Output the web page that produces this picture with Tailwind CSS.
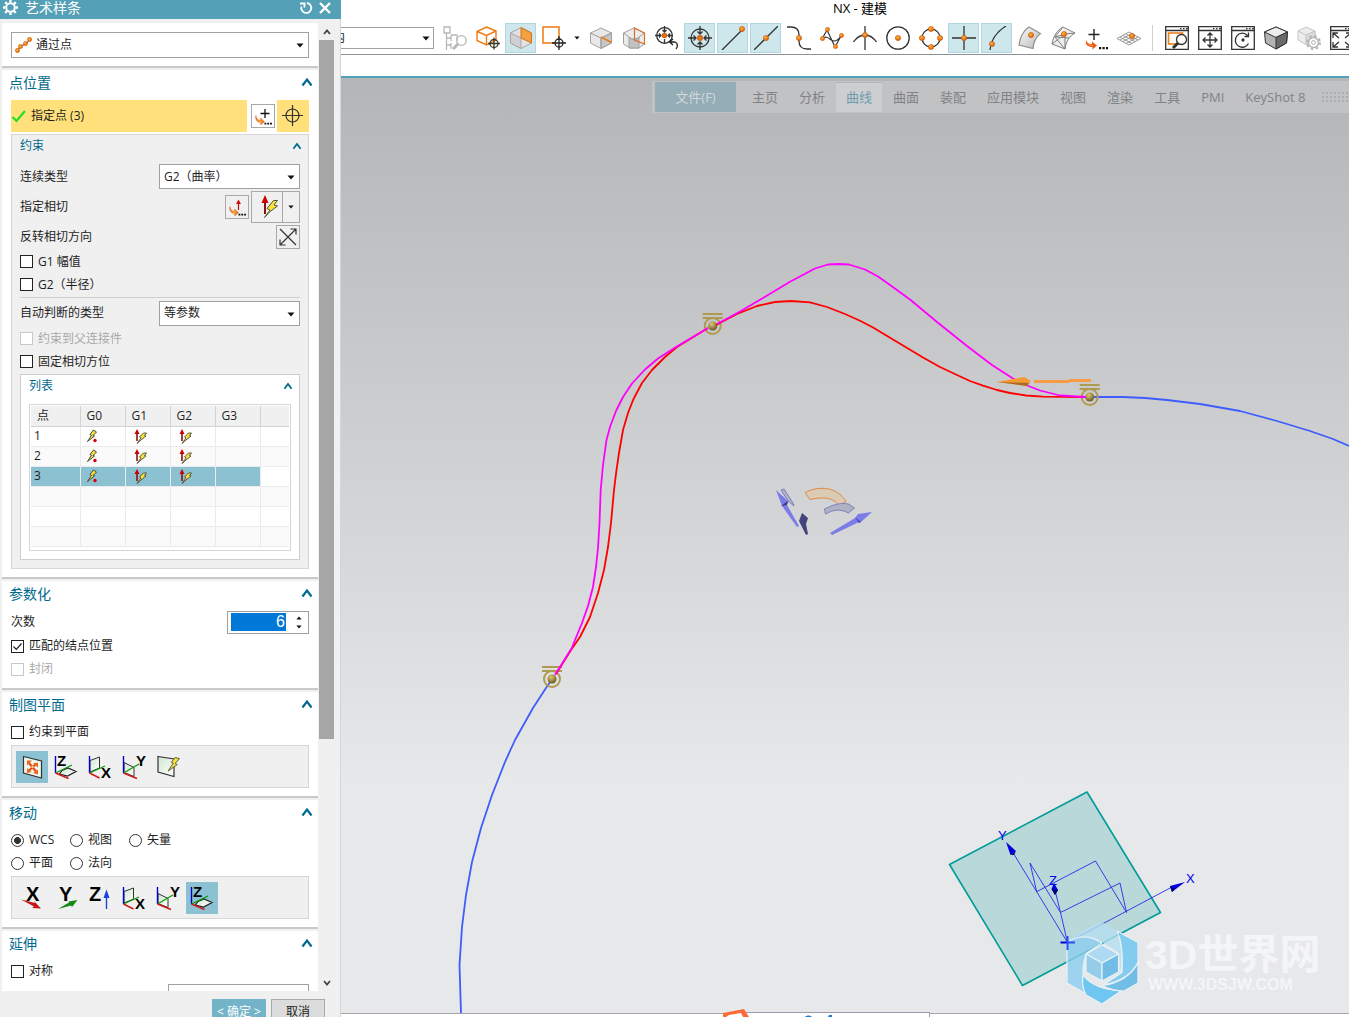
<!DOCTYPE html>
<html lang="zh-CN">
<head>
    <meta charset="UTF-8">
    <meta name="viewport" content="width=device-width, initial-scale=1.0">
    <title>NX - 建模</title>
    <script src="https://cdn.jsdelivr.net/npm/@tailwindcss/browser@4"></script>
</head>
<body class="flex h-screen overflow-hidden bg-white font-['Open_Sans','Noto_Sans_CJK_SC',sans-serif] text-xs text-[#1e1e1e]">

    <!-- shared icon parts -->
    <svg class="absolute w-0 h-0" aria-hidden="true">
        <defs>
            <radialGradient id="orange" cx=".4" cy=".35" r=".7"><stop offset="0" stop-color="#ffb03a"/><stop offset="1" stop-color="#d95f0e"/></radialGradient>
            <radialGradient id="gold" cx=".4" cy=".3" r=".8"><stop offset="0" stop-color="#e0c870"/><stop offset="1" stop-color="#5a4a1c"/></radialGradient>
            <linearGradient id="metal" x1="0" y1="0" x2="1" y2="1"><stop offset="0" stop-color="#fafafa"/><stop offset="1" stop-color="#b9b9b9"/></linearGradient>
            <linearGradient id="pale" x1="0" y1="0" x2="1" y2="1"><stop offset="0" stop-color="#cfe6d2"/><stop offset="1" stop-color="#ffffff"/></linearGradient>
            <linearGradient id="flame" x1="0" y1="0" x2="1" y2="0"><stop offset="0" stop-color="#f0601c"/><stop offset=".5" stop-color="#f8b030"/><stop offset="1" stop-color="#ec5c14"/></linearGradient>
        </defs>
        <symbol id="ball" viewBox="0 0 6 6"><circle cx="3" cy="3" r="2.6" fill="url(#orange)" stroke="#c8590c" stroke-width=".6"/></symbol>
        <symbol id="chevron" viewBox="0 0 12 10"><path d="M1.500 8.500 6 2.500 10.500 8.500" fill="none" stroke="#006a8e" stroke-width="2.200"/></symbol>
        <symbol id="caret" viewBox="0 0 8 5"><path d="M.5.5h7L4 4.500z" fill="#111"/></symbol>
        <symbol id="bolt" viewBox="0 0 12 14"><path d="M7.500 1 4 5.500l1.800.7L1 13.500 9.500 7.500 7.500 6.600 11.500 2z" fill="#f7e13c" stroke="#5a5a3a" stroke-width=".9"/></symbol>
        <symbol id="curve-arrow" viewBox="0 0 18 18"><path d="M1 8c0 3 2 5 5 5v-2.500l4 4-4 3.500v-2.500C2 15 0 12 1 8z" fill="url(#flame)" stroke="#c84a14" stroke-width=".4"/><path d="M10 15.500h2v2h-2zM13 15.500h2v2h-2zM16 15.500h2v2h-2z" fill="#111"/></symbol>
        <symbol id="g0" viewBox="0 0 12 14"><path d="M6.500 1 3 5.500l1.500.7L.5 12.500 7.500 7 6 6.500 9.500 3z" fill="#f7e13c" stroke="#4a4a3a"/><circle cx="8" cy="11.500" r="1.700" fill="#d40000"/></symbol>
        <symbol id="g1" viewBox="0 0 13 15"><path d="M3 12V4" stroke="#8b1010" stroke-width="1.600"/><path d="M.5 5 3 0l2.500 5z" fill="#c00"/><path d="M3 14.500 7 9 5.500 8l4-4h3L10.500 6.500l1.500.5-5 4z" fill="#f7e13c" stroke="#4a4a3a" stroke-width=".9"/></symbol>
        <symbol id="plane-z" viewBox="0 0 32 32">
            <path d="M12 19.500 18 17l8 3.500-8.500 4.500-8-2z" fill="url(#pale)" stroke="#222" stroke-width="1.200"/>
            <path d="M5.500 5v17" stroke="#00c" stroke-width="1.400"/><path d="M5.500 22 22 14" stroke="#0a9a0a" stroke-width="1.300"/><path d="M5.500 22 18.500 27.500" stroke="#d01818" stroke-width="1.500"/>
        </symbol>
        <symbol id="plane-x" viewBox="0 0 32 32">
            <path d="M6 9.500 15.500 6v11L6 21z" fill="url(#pale)" stroke="#333"/>
            <path d="M5.500 5v17" stroke="#00c" stroke-width="1.400"/><path d="M5.500 22 21 15" stroke="#0a9a0a" stroke-width="1.300"/><path d="M5.500 22 15.500 27" stroke="#d01818" stroke-width="1.500"/>
        </symbol>
        <symbol id="plane-y" viewBox="0 0 32 32">
            <path d="M6 11.500 16 16.500v9L6 21.500z" fill="url(#pale)" stroke="#333"/>
            <path d="M5.500 5v17" stroke="#00c" stroke-width="1.400"/><path d="M5.500 22 21 13" stroke="#0a9a0a" stroke-width="1.300"/><path d="M5.500 22 19 27.500" stroke="#d01818" stroke-width="1.500"/>
        </symbol>
        <symbol id="marker" viewBox="0 0 24 24"><path d="M2 1.500h20M2 5.500h20" stroke="#b09a50" stroke-width="2"/><circle cx="12" cy="13.500" r="8" fill="none" stroke="#b09a50" stroke-width="2"/><circle cx="12" cy="13.500" r="4.500" fill="url(#gold)"/></symbol>
    </svg>

    <!-- dialog -->
    <aside class="w-[341px] shrink-0 flex flex-col bg-[#f0f0f0] border-r border-[#d5d5d8]">
        <header class="h-[19px] shrink-0 -mr-px flex items-center bg-[#54a0b7] text-white text-sm pl-[3px] pr-[10px]">
            <svg class="w-[15px] h-[15px] -mt-1" viewBox="0 0 15 15" fill="none" stroke="#fff"><circle cx="7.500" cy="7.500" r="4.300" stroke-width="2"/><path d="M7.500 0v2.500M7.500 12.500V15M0 7.500h2.500M12.500 7.500H15M2.200 2.200l1.800 1.800M11 11l1.800 1.800M2.200 12.800 4 11M11 4l1.800-1.800" stroke-width="2.400"/></svg>
            <h1 class="ml-[7px] -mt-1 leading-5">艺术样条</h1>
            <button class="ml-auto -mt-1" aria-label="重置"><svg class="w-[14px] h-[14px]" viewBox="0 0 14 14" fill="none" stroke="#fff" stroke-width="1.800"><path d="M8 2a5 5 0 1 1-5.500 3.500"/><path d="M1 2.500h4.500v4"/></svg></button>
            <button class="ml-[6px] -mt-1" aria-label="关闭"><svg class="w-3 h-3" viewBox="0 0 12 12" stroke="#fff" stroke-width="2.400"><path d="M1 1l10 10M11 1 1 11"/></svg></button>
        </header>

        <div class="flex-1 min-h-0 flex pt-1 pl-[2px] pr-[6px]">
            <div class="flex-1 overflow-hidden">

                <section class="bg-white border-b-2 border-[#c9c9cb] mb-[2px] px-[9px] pt-[9px] pb-2">
                    <div class="relative">
                        <svg class="absolute left-1 top-[5px] w-[17px] h-4" viewBox="0 0 17 16"><path d="M2.500 13 6 9l5-2 4-4.500" fill="none" stroke="#444"/><use href="#ball" x="0" y="11" width="5" height="5"/><use href="#ball" x="3" y="7" width="5" height="5"/><use href="#ball" x="8" y="4" width="5" height="5"/><use href="#ball" x="12" y="0" width="5" height="5"/></svg>
                        <select aria-label="类型" class="appearance-none w-full h-[26px] bg-white border border-[#a0a0a0] pl-6"><option>通过点</option></select>
                        <svg class="absolute right-[5px] top-[11px] w-2 h-[5px]"><use href="#caret"/></svg>
                    </div>
                </section>

                <section class="bg-white border-b-2 border-[#c9c9cb] mb-[2px] px-[9px] pb-2">
                    <h2 class="h-[26px] -ml-[2px] -mr-[4px] flex items-center justify-between text-sm text-[#006a8e]">点位置<button aria-label="折叠"><svg class="w-3 h-[10px] -mt-[2px]"><use href="#chevron"/></svg></button></h2>
                    <div class="mt-1 h-8 flex items-center">
                        <div class="flex-1 h-full flex items-center bg-[#ffe07a]">
                            <svg class="w-4 h-4 mr-1" viewBox="0 0 16 16"><path d="M1.500 9 5.500 13 14 3" fill="none" stroke="#22e022" stroke-width="2.200"/></svg>指定点 (3)
                        </div>
                        <button class="w-6 h-6 mx-1 bg-white border border-[#a8a8a8]" aria-label="点对话框"><svg class="w-[22px] h-[22px]" viewBox="0 0 22 22"><path d="M13 4v9M8.500 8.500h9" stroke="#111" stroke-width="1.300"/><use href="#curve-arrow" x="3" y="3" width="17" height="17"/></svg></button>
                        <button class="w-8 h-8 -ml-[2px] flex items-center justify-center bg-[#ffe07a]" aria-label="指定点"><svg class="w-[22px] h-[22px]" viewBox="0 0 22 22" fill="none" stroke="#333" stroke-width="1.200"><circle cx="10.500" cy="10.500" r="6.500"/><path d="M10.500 0v21M0 10.500h21"/></svg></button>
                    </div>

                    <div class="mt-[2px] border border-[#d6d6d8] bg-[#f0f0f0] px-2 pb-2">
                        <h3 class="h-[22px] -mr-[2px] flex items-center justify-between text-[#006a8e]">约束<button aria-label="折叠"><svg class="w-[10px] h-2"><use href="#chevron"/></svg></button></h3>
                        <div class="mt-[5px] h-[29px] flex items-center justify-between">
                            <label for="continuity">连续类型</label>
                            <div class="relative">
                                <select id="continuity" class="appearance-none w-[141px] h-[25px] bg-white border border-[#a0a0a0] pl-1"><option>G2（曲率）</option></select>
                                <svg class="absolute right-[5px] top-[11px] w-2 h-[5px]"><use href="#caret"/></svg>
                            </div>
                        </div>
                        <div class="h-8 flex items-center">
                            <span class="mr-auto">指定相切</span>
                            <button class="w-6 h-6 mr-[2px] border border-[#a8a8a8]" aria-label="矢量对话框"><svg class="w-[22px] h-[22px]" viewBox="0 0 22 22"><path d="M12.500 5v9" stroke="#b01010" stroke-width="1.200"/><path d="M10 8 12.500 3.500 15 8z" fill="#d01010"/><use href="#curve-arrow" x="3" y="3" width="17" height="17"/></svg></button>
                            <button class="w-8 h-8 flex items-center justify-center border border-[#a8a8a8]" aria-label="自动判断的矢量"><svg class="w-6 h-6" viewBox="0 0 24 24"><path d="M10 19V6" stroke="#8b1010" stroke-width="2"/><path d="M6.500 8 10 0l3.500 8z" fill="#c00"/><path d="M9.500 22.500 15 15l-3-1.500 6.500-8h4L19 10l3.500 1-8 6z" fill="#f7e13c" stroke="#55553a"/></svg></button>
                            <button class="w-[18px] h-8 -ml-px flex items-center justify-center border border-[#a8a8a8]" aria-label="更多矢量"><svg class="w-[6px] h-1"><use href="#caret"/></svg></button>
                        </div>
                        <div class="h-[27px] flex items-center justify-between">
                            <span>反转相切方向</span>
                            <button class="w-6 h-6 border border-[#a8a8a8]" aria-label="反转相切方向"><svg class="w-[22px] h-[22px]" viewBox="0 0 22 22" fill="none" stroke="#333" stroke-width="1.200"><path d="M3 3l16 16M3.500 18.500 18.500 3.500M13.500 3H19v5.500M3 13.500V19h5.500"/></svg></button>
                        </div>
                        <label class="h-[23px] flex items-center gap-[5px]"><input type="checkbox" class="appearance-none w-[13px] h-[13px] bg-white border border-[#222]">G1 幅值</label>
                        <label class="h-[23px] flex items-center gap-[5px]"><input type="checkbox" class="appearance-none w-[13px] h-[13px] bg-white border border-[#222]">G2（半径）</label>
                        <hr class="my-px border-[#cfcfd2]">
                        <div class="h-7 flex items-center justify-between">
                            <label for="inferred">自动判断的类型</label>
                            <div class="relative">
                                <select id="inferred" class="appearance-none w-[141px] h-[25px] bg-white border border-[#a0a0a0] pl-1"><option>等参数</option></select>
                                <svg class="absolute right-[5px] top-[11px] w-2 h-[5px]"><use href="#caret"/></svg>
                            </div>
                        </div>
                        <label class="h-[23px] flex items-center gap-[5px] text-[#a9a9a9]"><input type="checkbox" disabled class="appearance-none w-[13px] h-[13px] bg-white border border-[#c8c8c8]">约束到父连接件</label>
                        <label class="h-[23px] flex items-center gap-[5px]"><input type="checkbox" class="appearance-none w-[13px] h-[13px] bg-white border border-[#222]">固定相切方位</label>

                        <div class="mt-px border border-[#cdcdd2] bg-white px-2 pb-2">
                            <h3 class="h-[22px] -mr-[2px] flex items-center justify-between text-[#006a8e]">列表<button aria-label="折叠"><svg class="w-[10px] h-2"><use href="#chevron"/></svg></button></h3>
                            <div class="mt-[7px] border border-[#d6d6d8] p-px pb-[3px]">
                                <table class="w-full table-fixed border-collapse text-left leading-4">
                                    <colgroup><col class="w-[49px]"><col class="w-[45px]"><col class="w-[45px]"><col class="w-[45px]"><col class="w-[45px]"><col></colgroup>
                                    <thead class="bg-[#f0f0f0]">
                                        <tr class="h-5 border-b border-[#d2d2d4]">
                                            <th class="font-normal p-0 pl-[6px] border-r border-[#d2d2d4]">点</th>
                                            <th class="font-normal p-0 pl-[6px] border-r border-[#d2d2d4]">G0</th>
                                            <th class="font-normal p-0 pl-[6px] border-r border-[#d2d2d4]">G1</th>
                                            <th class="font-normal p-0 pl-[6px] border-r border-[#d2d2d4]">G2</th>
                                            <th class="font-normal p-0 pl-[6px] border-r border-[#d2d2d4]">G3</th>
                                            <th class="p-0"></th>
                                        </tr>
                                    </thead>
                                    <tbody>
                                        <tr class="h-5 border-b border-[#ebebeb]">
                                            <td class="p-0 pl-[3px] border-r border-[#ebebeb]">1</td>
                                            <td class="p-0 pl-[6px] border-r border-[#ebebeb]"><svg class="w-3 h-[14px]"><use href="#g0"/></svg></td>
                                            <td class="p-0 pl-2 border-r border-[#ebebeb]"><svg class="w-[13px] h-[15px]"><use href="#g1"/></svg></td>
                                            <td class="p-0 pl-2 border-r border-[#ebebeb]"><svg class="w-[13px] h-[15px]"><use href="#g1"/></svg></td>
                                            <td class="p-0 border-r border-[#ebebeb]"></td><td class="p-0"></td>
                                        </tr>
                                        <tr class="h-5 border-b border-[#ebebeb] bg-[#fafafa]">
                                            <td class="p-0 pl-[3px] border-r border-[#ebebeb]">2</td>
                                            <td class="p-0 pl-[6px] border-r border-[#ebebeb]"><svg class="w-3 h-[14px]"><use href="#g0"/></svg></td>
                                            <td class="p-0 pl-2 border-r border-[#ebebeb]"><svg class="w-[13px] h-[15px]"><use href="#g1"/></svg></td>
                                            <td class="p-0 pl-2 border-r border-[#ebebeb]"><svg class="w-[13px] h-[15px]"><use href="#g1"/></svg></td>
                                            <td class="p-0 border-r border-[#ebebeb]"></td><td class="p-0"></td>
                                        </tr>
                                        <tr class="h-5 border-b border-[#ebebeb]">
                                            <td class="p-0 pl-[3px] border-r border-[#ebebeb] bg-[#8cc1d1]">3</td>
                                            <td class="p-0 pl-[6px] border-r border-[#ebebeb] bg-[#8cc1d1]"><svg class="w-3 h-[14px]"><use href="#g0"/></svg></td>
                                            <td class="p-0 pl-2 border-r border-[#ebebeb] bg-[#8cc1d1]"><svg class="w-[13px] h-[15px]"><use href="#g1"/></svg></td>
                                            <td class="p-0 pl-2 border-r border-[#ebebeb] bg-[#8cc1d1]"><svg class="w-[13px] h-[15px]"><use href="#g1"/></svg></td>
                                            <td class="p-0 border-r border-[#ebebeb] bg-[#8cc1d1]"></td><td class="p-0"></td>
                                        </tr>
                                        <tr class="h-5 border-b border-[#ebebeb] bg-[#fafafa]"><td class="border-r border-[#ebebeb]"></td><td class="border-r border-[#ebebeb]"></td><td class="border-r border-[#ebebeb]"></td><td class="border-r border-[#ebebeb]"></td><td class="border-r border-[#ebebeb]"></td><td></td></tr>
                                        <tr class="h-5 border-b border-[#ebebeb]"><td class="border-r border-[#ebebeb]"></td><td class="border-r border-[#ebebeb]"></td><td class="border-r border-[#ebebeb]"></td><td class="border-r border-[#ebebeb]"></td><td class="border-r border-[#ebebeb]"></td><td></td></tr>
                                        <tr class="h-5 border-b border-[#ebebeb] bg-[#fafafa]"><td class="border-r border-[#ebebeb]"></td><td class="border-r border-[#ebebeb]"></td><td class="border-r border-[#ebebeb]"></td><td class="border-r border-[#ebebeb]"></td><td class="border-r border-[#ebebeb]"></td><td></td></tr>
                                    </tbody>
                                </table>
                            </div>
                        </div>
                    </div>
                </section>

                <section class="bg-white border-b-2 border-[#c9c9cb] mb-[2px] px-[9px] pb-[7px]">
                    <h2 class="h-[26px] -ml-[2px] -mr-[4px] flex items-center justify-between text-sm text-[#006a8e]">参数化<button aria-label="折叠"><svg class="w-3 h-[10px] -mt-[2px]"><use href="#chevron"/></svg></button></h2>
                    <div class="mt-[3px] h-[25px] flex items-center justify-between">
                        <label for="degree">次数</label>
                        <div class="w-[82px] h-[23px] flex items-center border border-[#a0a0a0] bg-white pl-[3px]">
                            <input id="degree" type="text" value="6" class="w-[55px] h-[18px] bg-[#0078d7] text-white text-base text-right pr-px font-['Liberation_Sans',sans-serif]">
                            <div class="flex-1 flex flex-col items-center gap-[5px] pl-1">
                                <button aria-label="增加"><svg class="w-[6px] h-1 rotate-180"><use href="#caret"/></svg></button>
                                <button aria-label="减少"><svg class="w-[6px] h-1"><use href="#caret"/></svg></button>
                            </div>
                        </div>
                    </div>
                    <label class="relative h-[23px] flex items-center gap-[5px]"><input type="checkbox" checked class="peer appearance-none w-[13px] h-[13px] bg-white border border-[#222]"><svg class="absolute left-[2px] top-[7px] w-[9px] h-[9px] hidden peer-checked:block" viewBox="0 0 9 9"><path d="M.5 4.500 3.300 7.300 8.500 1.500" fill="none" stroke="#222" stroke-width="1.200"/></svg>匹配的结点位置</label>
                    <label class="h-[23px] flex items-center gap-[5px] text-[#a9a9a9]"><input type="checkbox" disabled class="appearance-none w-[13px] h-[13px] bg-white border border-[#c8c8c8]">封闭</label>
                </section>

                <section class="bg-white border-b-2 border-[#c9c9cb] mb-[2px] px-[9px] pb-2">
                    <h2 class="h-[26px] -ml-[2px] -mr-[4px] flex items-center justify-between text-sm text-[#006a8e]">制图平面<button aria-label="折叠"><svg class="w-3 h-[10px] -mt-[2px]"><use href="#chevron"/></svg></button></h2>
                    <label class="mt-[3px] h-[23px] flex items-center gap-[5px]"><input type="checkbox" class="appearance-none w-[13px] h-[13px] bg-white border border-[#222]">约束到平面</label>
                    <div class="mt-px h-[43px] flex items-end gap-[2px] pl-1 pb-1 border border-[#d6d6d8] bg-[#f0f0f0]">
                        <button class="w-8 h-8 bg-[#8cc1d1]" aria-label="视图平面"><svg class="w-8 h-8" viewBox="0 0 32 32"><path d="M7.500 5.500 25.500 10v17L7.500 22z" fill="#eef8ee" stroke="#333" stroke-width="1.200"/><path d="M12.500 11.500 20.500 21M20.500 12.500 12.500 20" stroke="#e84a10" stroke-width="2.200"/><path d="M11 9.500h5l-5 5zM22 11.500v5l-5-4zM11 17v5l4.500-1zM22 23.500v-5l-5 3.500z" fill="#f0641c"/><circle cx="16.500" cy="16" r="1.200" fill="#ffd0a0"/></svg></button>
                        <button class="w-8 h-8" aria-label="XC-YC 平面"><svg class="w-8 h-8" viewBox="0 0 32 32"><use href="#plane-z"/><text x="7" y="15" font-family="Liberation Sans" font-weight="700" font-size="15">Z</text></svg></button>
                        <button class="w-8 h-8" aria-label="YC-ZC 平面"><svg class="w-8 h-8" viewBox="0 0 32 32"><use href="#plane-x"/><text x="17" y="27" font-family="Liberation Sans" font-weight="700" font-size="15">X</text></svg></button>
                        <button class="w-8 h-8" aria-label="XC-ZC 平面"><svg class="w-8 h-8" viewBox="0 0 32 32"><use href="#plane-y"/><text x="18" y="15" font-family="Liberation Sans" font-weight="700" font-size="15">Y</text></svg></button>
                        <button class="w-8 h-8" aria-label="自动判断的平面"><svg class="w-8 h-8" viewBox="0 0 32 32"><path d="M6 5.500 22 8v17.500L6 21z" fill="url(#pale)" stroke="#333" stroke-width="1.200"/><use href="#bolt" x="15" y="4" width="13" height="18"/></svg></button>
                    </div>
                </section>

                <section class="bg-white border-b-2 border-[#c9c9cb] mb-[2px] px-[9px] pb-2">
                    <h2 class="h-[26px] -ml-[2px] -mr-[4px] flex items-center justify-between text-sm text-[#006a8e]">移动<button aria-label="折叠"><svg class="w-3 h-[10px] -mt-[2px]"><use href="#chevron"/></svg></button></h2>
                    <div class="mt-[3px] grid grid-cols-[59px_59px_59px] auto-rows-[23px] items-center">
                        <label class="flex items-center gap-[5px]"><input type="radio" name="move" checked class="appearance-none w-[13px] h-[13px] rounded-full bg-white border border-[#333] checked:bg-[radial-gradient(circle,#333_40%,white_48%)]">WCS</label>
                        <label class="flex items-center gap-[5px]"><input type="radio" name="move" class="appearance-none w-[13px] h-[13px] rounded-full bg-white border border-[#333] checked:bg-[radial-gradient(circle,#333_40%,white_48%)]">视图</label>
                        <label class="flex items-center gap-[5px]"><input type="radio" name="move" class="appearance-none w-[13px] h-[13px] rounded-full bg-white border border-[#333] checked:bg-[radial-gradient(circle,#333_40%,white_48%)]">矢量</label>
                        <label class="flex items-center gap-[5px]"><input type="radio" name="move" class="appearance-none w-[13px] h-[13px] rounded-full bg-white border border-[#333] checked:bg-[radial-gradient(circle,#333_40%,white_48%)]">平面</label>
                        <label class="flex items-center gap-[5px]"><input type="radio" name="move" class="appearance-none w-[13px] h-[13px] rounded-full bg-white border border-[#333] checked:bg-[radial-gradient(circle,#333_40%,white_48%)]">法向</label>
                    </div>
                    <div class="mt-px h-[43px] flex items-end gap-[2px] pl-1 pb-1 border border-[#d6d6d8] bg-[#f0f0f0]">
                        <button class="w-8 h-8" aria-label="沿 X"><svg class="w-8 h-8" viewBox="0 0 32 32"><text x="10" y="19" font-family="Liberation Sans" font-weight="700" font-size="20">X</text><path d="M5 17.500 19 21l-1-2 7 7.500-9-.5 2-1.500z" fill="#c81414"/></svg></button>
                        <button class="w-8 h-8" aria-label="沿 Y"><svg class="w-8 h-8" viewBox="0 0 32 32"><text x="9" y="19" font-family="Liberation Sans" font-weight="700" font-size="20">Y</text><path d="M8 27 19 20.500 18.500 19.500 27.500 18 22 25l-1-1.500z" fill="#138a13"/></svg></button>
                        <button class="w-8 h-8" aria-label="沿 Z"><svg class="w-8 h-8" viewBox="0 0 32 32"><text x="5" y="19" font-family="Liberation Sans" font-weight="700" font-size="20">Z</text><path d="M21.800 27V16H19.500L22.500 7.500l3 8.500h-2.300V27z" fill="#1446d8"/></svg></button>
                        <button class="w-8 h-8" aria-label="YC-ZC"><svg class="w-8 h-8" viewBox="0 0 32 32"><use href="#plane-x"/><text x="17" y="27" font-family="Liberation Sans" font-weight="700" font-size="15">X</text></svg></button>
                        <button class="w-8 h-8" aria-label="XC-ZC"><svg class="w-8 h-8" viewBox="0 0 32 32"><use href="#plane-y"/><text x="18" y="15" font-family="Liberation Sans" font-weight="700" font-size="15">Y</text></svg></button>
                        <button class="w-8 h-8 bg-[#8cc1d1]" aria-label="XC-YC"><svg class="w-8 h-8" viewBox="0 0 32 32"><use href="#plane-z"/><text x="7" y="15" font-family="Liberation Sans" font-weight="700" font-size="15">Z</text></svg></button>
                    </div>
                </section>

                <section class="bg-white px-[9px] pb-2">
                    <h2 class="h-[26px] -ml-[2px] -mr-[4px] flex items-center justify-between text-sm text-[#006a8e]">延伸<button aria-label="折叠"><svg class="w-3 h-[10px] -mt-[2px]"><use href="#chevron"/></svg></button></h2>
                    <label class="mt-[3px] h-[23px] flex items-center gap-[5px]"><input type="checkbox" class="appearance-none w-[13px] h-[13px] bg-white border border-[#222]">对称</label>
                    <input type="text" aria-label="起点" class="block mt-px ml-auto w-[141px] h-[25px] border border-[#a0a0a0]">
                </section>
            </div>

            <!-- scrollbar -->
            <div class="ml-px w-[15px] flex flex-col items-center bg-[#f0f0f0]">
                <svg class="w-2 h-[17px] shrink-0" viewBox="0 0 8 17"><path d="M1 11 4 7.500 7 11" fill="none" stroke="#444" stroke-width="1.800"/></svg>
                <div class="w-full basis-[699px] bg-[#a6a6a6]"></div>
                <svg class="w-2 h-[17px] shrink-0 mt-auto" viewBox="0 0 8 17"><path d="M1 7 4 10.500 7 7" fill="none" stroke="#444" stroke-width="1.800"/></svg>
            </div>
        </div>

        <footer class="h-[26px] shrink-0 flex justify-end gap-[5px] pt-2 pr-[15px] overflow-hidden">
            <button class="w-[54px] h-[26px] shrink-0 bg-[#74b4c8] text-white">&lt; 确定 &gt;</button>
            <button class="w-[54px] h-[26px] shrink-0 bg-[#dcdcdc] border border-[#a8a8a8]">取消</button>
        </footer>
    </aside>

    <!-- main window -->
    <main class="flex-1 min-w-0 flex flex-col">
        <div class="h-[22px] shrink-0 text-center text-[13px] leading-4 pl-[30px] text-black">NX - 建模</div>

        <div class="h-[33px] shrink-0 flex items-center gap-[2px] border-b border-[#8a9298] overflow-hidden">
            <div class="relative w-[93px] mr-[3px] shrink-0 overflow-hidden">
                <select aria-label="选择范围" class="appearance-none block -ml-[86px] w-[179px] h-[22px] bg-white border border-[#a0a0a0] pl-[5px]"><option>仅在工作部件内</option></select>
                <svg class="absolute right-1 top-[9px] w-2 h-[5px]"><use href="#caret"/></svg>
            </div>
            <button class="w-[31px] h-[30px] shrink-0 flex items-center justify-center" aria-label="选择过滤器"><svg class="w-6 h-6" viewBox="0 0 24 24" fill="none" stroke="#b8b8b8" stroke-width="1.300"><path d="M1 1h6v6H1zM3.500 7v17M3.500 12H8M3.500 19H8M8 9h6v6M8 15V9M8 17v6"/><circle cx="18.500" cy="14.500" r="4.800"/><path d="M15 18l-5 5" stroke-width="3"/></svg></button>
            <button class="w-[31px] h-[30px] shrink-0 flex items-center justify-center" aria-label="组件"><svg class="w-6 h-6" viewBox="0 0 24 24" fill="none" stroke="#ee7a10" stroke-width="1.400"><path d="M10.500 1 20 5v9l-9.500 5L1 14.500V5.500zM1 5.500l9.500 4L20 5M10.500 9.500V19"/><g stroke="#3a3a2a" stroke-width="1.300"><circle cx="18" cy="17.500" r="4"/><path d="M18 11.500v12M12 17.500h12"/></g></svg></button>
            <button class="w-[31px] h-[30px] shrink-0 flex items-center justify-center border border-[#b0d6df] bg-[#cde7ec]" aria-label="面"><svg class="w-6 h-6" viewBox="0 0 24 24" stroke="#a8a8a8"><path d="M12 1.500 22.500 7v10L12 22.500 1.500 17V7z" fill="#e2e2e2"/><path d="M12 12v10.500L1.500 17V7z" fill="#d0d0d0"/><path d="M12 1.500 22.500 7v10L12 12z" fill="#f2a040" stroke="#d8701c"/></svg></button>
            <button class="w-[31px] h-[30px] shrink-0 flex items-center justify-center" aria-label="框选"><svg class="w-6 h-6" viewBox="0 0 24 24" fill="none"><path d="M1 1h16v16H1z" stroke="#ee7a10" stroke-width="1.500"/><circle cx="17" cy="17" r="4" fill="#fff" stroke="#222" stroke-width="1.300"/><path d="M17 10v14M10 17h14" stroke="#222" stroke-width="1.300"/></svg></button>
            <button class="w-3 shrink-0 flex justify-center" aria-label="更多"><svg class="w-[6px] h-1"><use href="#caret"/></svg></button>
            <button class="w-[31px] h-[30px] shrink-0 flex items-center justify-center" aria-label="边"><svg class="w-6 h-6" viewBox="0 0 24 24" stroke="#a0a0a0"><path d="M12 2 22.500 7v10L12 22.500 1.500 17V7z" fill="#e8e8e8"/><path d="M12 12 22.500 7v10L12 22.500z" fill="#c6c6c6"/><path d="M1.500 7 12 12 22.500 7M12 12v10.500" fill="none"/><path d="M12 11l10.500 5.500" stroke="#ee7a10" stroke-width="1.500"/></svg></button>
            <button class="w-[31px] h-[30px] shrink-0 flex items-center justify-center" aria-label="实体边"><svg class="w-6 h-6" viewBox="0 0 24 24" stroke="#a0a0a0"><path d="M12 2 22.500 7v11L17 22H8L1.500 18V7z" fill="#ececec"/><path d="M7 11c3 3 7 3 10 0v11H7z" fill="#c2c2c2"/><path d="M1.500 7 7 11M7 11c3 3 7 3 10 0l5.500-4" fill="none"/><path d="M12.500 2v12L22.500 18V7z" fill="none" stroke="#d8702c" stroke-width="1.200"/></svg></button>
            <button class="w-[31px] h-[30px] shrink-0 flex items-center justify-center" aria-label="重置捕捉"><svg class="w-6 h-6" viewBox="0 0 24 24" fill="none" stroke="#333" stroke-width="1.300"><circle cx="9.500" cy="9.500" r="7.800"/><path d="M9.500 0v6M9.500 13v5M0 9.500h6M13 9.500h5M7.500 4l2 2 2-2M4 7.500l2 2-2 2M15 7.500l-2 2 2 2"/><circle cx="9.500" cy="9.500" r="2" fill="#ee7a10" stroke="#d2600c"/><path d="M15 16h5c3 1 3 5 1 7M18 13l-3.500 3L18 19" stroke="#222"/></svg></button>
            <button class="w-[31px] h-[30px] shrink-0 flex items-center justify-center border border-[#b0d6df] bg-[#cde7ec]" aria-label="启用捕捉点"><svg class="w-6 h-6" viewBox="0 0 24 24" fill="none" stroke="#333" stroke-width="1.300"><circle cx="12" cy="12" r="9"/><path d="M12 0v8M12 16v8M0 12h8M16 12h8M9.500 5.500 12 8l2.500-2.500M9.500 18.500 12 16l2.500 2.500M5.500 9.500 8 12l-2.500 2.500M18.500 9.500 16 12l2.500 2.500"/><circle cx="12" cy="12" r="2.300" fill="#ee7a10" stroke="#d2600c"/></svg></button>
            <button class="w-[31px] h-[30px] shrink-0 flex items-center justify-center border border-[#b0d6df] bg-[#cde7ec]" aria-label="端点"><svg class="w-6 h-6" viewBox="0 0 24 24"><path d="M1 24 22 3" stroke="#333" stroke-width="1.300"/><use href="#ball" x="18" y="0" width="6" height="6"/></svg></button>
            <button class="w-[31px] h-[30px] shrink-0 flex items-center justify-center border border-[#b0d6df] bg-[#cde7ec]" aria-label="中点"><svg class="w-6 h-6" viewBox="0 0 24 24"><path d="M0 24 24 0" stroke="#333" stroke-width="1.300"/><use href="#ball" x="9" y="9" width="6" height="6"/></svg></button>
            <button class="w-[31px] h-[30px] shrink-0 flex items-center justify-center" aria-label="控制点"><svg class="w-6 h-6" viewBox="0 0 24 24"><path d="M0 1h4c5 0 8 3 8 8v6c0 5 3 8 8 8h5" fill="none" stroke="#333" stroke-width="1.300"/><use href="#ball" x="9" y="9" width="6" height="6"/></svg></button>
            <button class="w-[31px] h-[30px] shrink-0 flex items-center justify-center" aria-label="极点"><svg class="w-6 h-6" viewBox="0 0 24 24"><path d="M2 13 7 4l8 17 6-11M2 13c6-5 8 2 12 2 3 0 5-2 7-5" fill="none" stroke="#333" stroke-width="1.200"/><use href="#ball" x="0" y="10" width="5" height="5"/><use href="#ball" x="5" y="1" width="5" height="5"/><use href="#ball" x="13" y="18" width="5" height="5"/><use href="#ball" x="19" y="7" width="5" height="5"/></svg></button>
            <button class="w-[31px] h-[30px] shrink-0 flex items-center justify-center" aria-label="交点"><svg class="w-6 h-6" viewBox="0 0 24 24"><path d="M12 0v24M.5 16C4 11 8 9 12 9s8 2 11.500 7" fill="none" stroke="#333" stroke-width="1.300"/><use href="#ball" x="9" y="6" width="6" height="6"/></svg></button>
            <button class="w-[31px] h-[30px] shrink-0 flex items-center justify-center" aria-label="圆心"><svg class="w-6 h-6" viewBox="0 0 24 24"><circle cx="12" cy="12" r="11.200" fill="none" stroke="#333" stroke-width="1.300"/><use href="#ball" x="9" y="9" width="6" height="6"/></svg></button>
            <button class="w-[31px] h-[30px] shrink-0 flex items-center justify-center" aria-label="象限点"><svg class="w-6 h-6" viewBox="0 0 24 24"><circle cx="12" cy="12" r="9" fill="none" stroke="#333" stroke-width="1.300"/><use href="#ball" x="9" y="0" width="6" height="6"/><use href="#ball" x="9" y="18" width="6" height="6"/><use href="#ball" x="0" y="9" width="6" height="6"/><use href="#ball" x="18" y="9" width="6" height="6"/></svg></button>
            <button class="w-[31px] h-[30px] shrink-0 flex items-center justify-center border border-[#b0d6df] bg-[#cde7ec]" aria-label="现有点"><svg class="w-6 h-6" viewBox="0 0 24 24"><path d="M12 0v24M0 12h24" stroke="#333" stroke-width="1.300"/><use href="#ball" x="9" y="9" width="6" height="6"/></svg></button>
            <button class="w-[31px] h-[30px] shrink-0 flex items-center justify-center border border-[#b0d6df] bg-[#cde7ec]" aria-label="曲线上的点"><svg class="w-6 h-6" viewBox="0 0 24 24"><path d="M21 0C13 5 6 13 5 24" fill="none" stroke="#333" stroke-width="1.300"/><use href="#ball" x="4" y="15" width="6" height="6"/></svg></button>
            <button class="w-[31px] h-[30px] shrink-0 flex items-center justify-center" aria-label="面上的点"><svg class="w-6 h-6" viewBox="0 0 24 24"><path d="M11 1 22.500 7.500C18 11 15.500 16 15 22.500L1 19C2 12 5 5 11 1z" fill="url(#metal)" stroke="#909090" stroke-width="1.200"/><use href="#ball" x="10" y="6" width="6" height="6"/></svg></button>
            <button class="w-[31px] h-[30px] shrink-0 flex items-center justify-center" aria-label="小平面顶点"><svg class="w-6 h-6" viewBox="0 0 24 24"><path d="M12 1 24 7c-5 3-9 8-10 16L1 18C2 11 6 4 12 1zM12 1 4 11l10 12M4 11l10-3 10-1M1 18 14 8l0 15M4 11 18 12" fill="#e4e4e4" fill-opacity=".7" stroke="#808080"/><use href="#ball" x="10" y="5" width="6" height="6"/></svg></button>
            <button class="w-[31px] h-[30px] shrink-0 flex items-center justify-center" aria-label="点构造器"><svg class="w-6 h-6" viewBox="0 0 24 24"><path d="M10 3v11M4.500 8.500h11" stroke="#222" stroke-width="1.400"/><path d="M2 14c1 3 3 4 6 4v-2.500l5 4-4.500 4V21C4 21 1 19 2 14z" fill="#ee5a20"/><path d="M3 16c2 3 4 3.500 6 3.500" fill="none" stroke="#f8b030"/><path d="M15 21h2.200v2.200H15zM18.500 21h2.200v2.200h-2.200zM22 21h2v2.200h-2z" fill="#111"/></svg></button>
            <button class="w-[31px] h-[30px] shrink-0 flex items-center justify-center" aria-label="有界栅格上的点"><svg class="w-6 h-6" viewBox="0 0 24 24"><path d="M0 12.500 12 6l12 6.500L12 19zM3 11l12 6.500M6 9.500l12 6M9 8l12 6M3 14 15 7.500M6 15.500 18 9M9 17.500 21 11" fill="none" stroke="#999"/><use href="#ball" x="12" y="7" width="6" height="6"/></svg></button>
            <div class="w-[13px] h-[26px] shrink-0 flex justify-center"><div class="w-px h-full bg-[#d0d0d0]"></div></div>
            <button class="w-[31px] h-[30px] shrink-0 flex items-center justify-center" aria-label="缩放"><svg class="w-6 h-6" viewBox="0 0 24 24" fill="none" stroke="#333" stroke-width="1.300"><path d="M.7.700h22.600v22.600H.7zM.7 4.500h22.600M15 2.600h1.500M18 2.600h1.500M21 2.600h1.500"/><path d="M3.500 7h14v11h-14z" stroke="#ee7a10" stroke-width="1.600"/><circle cx="16.500" cy="13.500" r="5" fill="#fff"/><path d="M13 17l-5 5" stroke-width="3"/></svg></button>
            <button class="w-[31px] h-[30px] shrink-0 flex items-center justify-center" aria-label="平移"><svg class="w-6 h-6" viewBox="0 0 24 24" fill="none" stroke="#333" stroke-width="1.300"><path d="M.7.700h22.600v22.600H.7zM.7 4.500h22.600M15 2.600h1.500M18 2.600h1.500M21 2.600h1.500M12 7v14M5 14h14M9.500 9.500 12 7l2.500 2.500M9.500 18.500 12 21l2.500-2.500M7.500 11.500 5 14l2.500 2.500M16.500 11.500 19 14l-2.500 2.500"/></svg></button>
            <button class="w-[31px] h-[30px] shrink-0 flex items-center justify-center" aria-label="旋转"><svg class="w-6 h-6" viewBox="0 0 24 24" fill="none" stroke="#333" stroke-width="1.300"><path d="M.7.700h22.600v22.600H.7zM.7 4.500h22.600M15 2.600h1.500M18 2.600h1.500M21 2.600h1.500M17.500 17.500A7 7 0 1 1 16.500 9.500M17.500 6.500v4h-4"/><circle cx="12" cy="14" r="1" fill="#333"/></svg></button>
            <button class="w-[31px] h-[30px] shrink-0 flex items-center justify-center" aria-label="着色"><svg class="w-6 h-6" viewBox="0 0 24 24" stroke="#333" stroke-linejoin="round"><path d="M12 1 23.500 6 22.500 17 12 23 1.500 17 .5 6z" fill="#b4b4b4"/><path d="M12 1 23.500 6 12 11.500.5 6z" fill="#ededed"/><path d="M12 11.500 23.500 6 22.500 17 12 23z" fill="#6a6a6a"/></svg></button>
            <button class="w-[31px] h-[30px] shrink-0 flex items-center justify-center" aria-label="显示设置"><svg class="w-6 h-6" viewBox="0 0 24 24" stroke="#c4c4c4"><path d="M9 1 18 5v9l-9 4.500L1 14V5z" fill="#ececec"/><path d="M9 9 18 5v9l-9 4.500z" fill="#dcdcdc"/><path d="M1 5l8 4" fill="none"/><circle cx="16.500" cy="16.500" r="5" fill="#fff" stroke="#b4b4b4" stroke-width="1.500"/><circle cx="16.500" cy="16.500" r="6.500" fill="none" stroke="#b4b4b4" stroke-width="2" stroke-dasharray="2.500 2.600"/><circle cx="16.500" cy="16.500" r="2" fill="none" stroke="#b4b4b4"/></svg></button>
            <button class="w-[31px] h-[30px] shrink-0 flex items-center justify-center" aria-label="适合窗口"><svg class="w-6 h-6" viewBox="0 0 24 24" fill="none" stroke="#333" stroke-width="1.300"><path d="M.7.700h22.600v22.600H.7zM.7 4.500h22.600M15 2.600h1.500M18 2.600h1.500M3 12V7h5M3 7l6 5M16 7h5v5M21 7l-6 5M3 16v5h5M3 21l6-5M21 16v5h-5M21 21l-6-5"/></svg></button>
        </div>

        <div class="h-[23px] shrink-0 border-b-2 border-[#54a0b7]"></div>

        <div class="relative flex-1 min-h-0 overflow-hidden bg-linear-to-b from-[#b4b5b7] to-[#e6e8e9] to-75%">
            <svg class="absolute inset-0 w-full h-full" viewBox="341 78 1008 935" preserveAspectRatio="xMinYMin slice" fill="none" stroke-linejoin="round">
                <!-- neighbouring curves -->
                <polyline points="1090,397 1123,397 1145,398 1167,400 1200,404 1240,411 1277,421 1310,431 1333,439 1349,446" stroke="#3f5cff" stroke-width="1.800"/>
                <polyline points="552,679 546,688 533,708 515,740 505,762 492,795 481,828 472,862 466,895 462,927 459.500,965 461,1013" stroke="#3f5cff" stroke-width="1.800"/>
                <use href="#marker" x="700.700" y="312.500" width="24" height="24"/>
                <use href="#marker" x="1077.700" y="383.500" width="24" height="24"/>
                <use href="#marker" x="540" y="665.500" width="24" height="24"/>
                <!-- original and edited spline -->
                <polyline points="556,674 571,650 580,637 590,617 598,593 604,570 608,547 611,523 614,490 616.500,470 619,453 623,430 628,413 633.500,399 642,383 652,370 665,357 677,347 708,328" stroke="#f00" stroke-width="1.800"/>
                <polyline points="716,325 737,314 757,306 775,302 791,301 810,302.300 827,307 845,314 860,320.700 873,327.500 898,342.500 923,357.500 940,367 957,375 970,381 983,385.700 997,390 1010,393 1026,395.500 1043,396.700 1086,397" stroke="#f00" stroke-width="1.800"/>
                <polyline points="555,675 571.500,648.500 582,623 588,606 593,587 596,567 598,548 599.500,523 600.700,490 603,465 606.500,440 610,427 616,411 623,397 632,383.500 645,369.500 658,358.500 676,347 708,328" stroke="#f0f" stroke-width="1.800"/>
                <polyline points="717,324 740,311.500 763,298 790,281.700 815,268.500 828,264.500 838,264 849,264.500 865,269.500 878,276.500 890,285 910,299.500 937,322 967,346 992,365 1013,378.500 1026,385 1040,390.500 1060,395.500 1086,397" stroke="#f0f" stroke-width="1.800"/>
                <!-- tangent handle -->
                <path d="M1034 381.500h35M1069 380.500h22" stroke="#f79b45" stroke-width="3"/>
                <path d="M997 382 1024 377 1031 381 1027 386z" fill="#f59a32"/><path d="M997 382 1027 386 1029 383z" fill="#a8682a"/>
                <!-- dynamic triad -->
                <path d="M805 492.500c14-7 32-6 41 9l-7 4c-6-8-15-9-29-6z" fill="#dccbb4" stroke="#e08a3c"/>
                <path d="M824.500 509c12-6 18-6 24-5l6 4-6 5c-8-4-14-4-23 1z" fill="#b0b2c2" stroke="#7d80c4"/>
                <path d="M781 490l3-1 9 14 1 3-6-5z" fill="#b0b2c2" stroke="#7d80c4"/>
                <path d="M776 490 788 501 787 505 799 526 797 527 782 506z" fill="#7b7ce8"/><path d="M781 506 788 501 787 505z" fill="#3a3a78"/>
                <path d="M802 513 808 518 806 524 808 534 806 535 799 521z" fill="#43437e"/>
                <path d="M872 512 858 514 855 518 830 533 832 535 857 523 861 522z" fill="#7b7ce8"/><path d="M855 517 859 523 861 522z" fill="#4a4aa8"/>
                <!-- drawing plane -->
                <path d="M1087 792 1160.500 912.500 1022.500 985.500 949.500 864.500z" fill="#b8d8da" stroke="#009c98" stroke-width="1.600"/>
                <path d="M1067.500 942.500 1172 887M1067.500 942.500 1012 851M1067.500 942.500 1060.500 912.500 1055 890M1030 863l6.700 28.700L1095.500 861 1126.500 912.500M1030 863l30.500 49.500L1120 883l6.500 29.500" stroke="#2a2ae8" stroke-width=".9"/>
                <path d="M1185 882 1172 892 1170 886zM1006 842 1016 851 1010.500 855zM1054 883 1058 890 1055 895 1051.500 889z" fill="#0000e0"/>
                <path d="M1010.500 855 1016 851 1014 855zM1170 886 1175 889 1172 892zM1051.500 889 1058 890 1055 895z" fill="#000070"/>
                <g fill="#0000f0" font-family="Liberation Sans" font-size="13"><text x="1186" y="883">X</text><text x="998" y="840">Y</text><text x="1049" y="885">Z</text></g>
                <!-- watermark -->
                <g fill-opacity=".8" stroke="#e8f2f6" stroke-width="1.200">
                    <path d="M1102 922.500C1088 926 1078 933 1067 942c10-8 26-7 38 2l13 8c3 10 2 18 0 26 6-16 4-38-3-49z" fill="#b4def0" stroke="none"/>
                    <path d="M1067 942.500v40.500l21 12c-7-13-6-32-1-42l15-10c-12-8-24-8-35-.5z" fill="#8ccdf0"/>
                    <path d="M1117 931l21 11.500v20c-5 10-17 20-34 22l18-12c1-18 0-31-5-41.500z" fill="#6cc4f0"/>
                    <path d="M1083 975c8 11 22 15 38 16l-19 13-16-9c-3-6-4-14-3-20z" fill="#50bdf2"/>
                    <path d="M1102 985.500c16-2 30-10 36-23V983l-14 8c-8 0-15-2-22-5.500z" fill="#55b2e4"/>
                    <path d="M1102 945 1118.500 954 1102 963 1086 954z" fill="#9fd6f2"/><path d="M1086 954 1102 963V981L1086 972z" fill="#80c4ea"/><path d="M1118.500 954 1102 963V981L1118.500 972z" fill="#55b2e4"/>
                </g>
                <path d="M1060.500 942.500h7" stroke="#0000e0" stroke-width="2"/><path d="M1067.500 936v14M1068 942.500h7" stroke="#2a50f0" stroke-width="2"/>
                <g fill="#f4f5f7" font-weight="700"><text x="1145" y="969" font-family="Liberation Sans, Noto Sans CJK SC, sans-serif" font-size="41">3D世界网</text><text x="1148" y="990" font-family="Liberation Sans, sans-serif" font-size="16">WWW.3DSJW.COM</text></g>
            </svg>

            <!-- faded ribbon tabs -->
            <nav class="absolute top-[3px] left-[311px] right-0 h-[32px] flex items-stretch gap-px pl-[3px] pt-px pb-px bg-[#c1c2c4] text-[13px] leading-[30px] text-[#808284] whitespace-nowrap overflow-hidden">
                <a href="#" class="w-[81px] shrink-0 mr-[5px] text-center bg-[#94adb7] text-[#d2d8db]">文件(F)</a>
                <a href="#" class="px-[10px]">主页</a>
                <a href="#" class="px-[10px]">分析</a>
                <a href="#" class="px-[10px] bg-[#cdced0] border-t border-[#b4b5b7] leading-7 text-[#6e9dac]">曲线</a>
                <a href="#" class="px-[10px]">曲面</a>
                <a href="#" class="px-[10px]">装配</a>
                <a href="#" class="px-[10px]">应用模块</a>
                <a href="#" class="px-[10px]">视图</a>
                <a href="#" class="px-[10px]">渲染</a>
                <a href="#" class="px-[10px]">工具</a>
                <a href="#" class="px-[10px]">PMI</a>
                <a href="#" class="px-[10px]">KeyShot 8</a>
                <svg class="w-[30px] h-3 mt-[9px] ml-[6px] shrink-0" viewBox="0 0 30 12"><path d="M0 2h30M0 6h30M0 10h30" stroke="#acadaf" stroke-width="2" stroke-dasharray="2 2"/></svg>
            </nav>
        </div>

        <footer class="relative h-1 shrink-0 border-t border-[#a6a6a8] bg-white">
            <div class="absolute left-[394px] -top-[2px] w-[195px] h-[6px] border-t border-r border-[#9a9aa8] bg-white"></div>
            <svg class="absolute left-[382px] -top-[5px] w-[120px] h-2" viewBox="0 0 120 8"><path d="M0 4 21 0 26 8H20L18 4 6 6 3 8H0z" fill="#fb6a38"/><path d="M82 8c2-2 5-2 7 0zM105 8l1-2h3v2z" fill="#1a7ad4"/></svg>
        </footer>
    </main>
</body>
</html>
